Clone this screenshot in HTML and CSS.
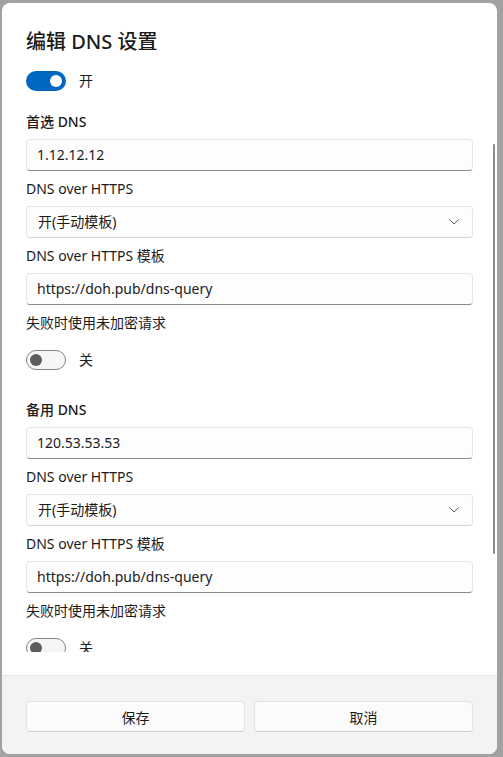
FILE: index.html
```html
<!DOCTYPE html>
<html lang="zh-CN">
<head>
<meta charset="utf-8">
<link rel="stylesheet" href="styles.css">
</head>
<body>
<div class="dialog">
  <div class="main">
    <div class="scroll">
      <h1 class="title">编辑 DNS 设置</h1>
      <div class="toggle-row top-toggle">
        <span class="toggle on"><span class="knob"></span></span>
        <span class="toggle-label">开</span>
      </div>

      <section class="group">
        <div class="heading">首选 DNS</div>
        <div class="field input">1.12.12.12</div>
        <div class="label">DNS over HTTPS</div>
        <div class="field select"><span>开(手动模板)</span>
          <svg class="chev" width="10" height="6" viewBox="0 0 10 6"><path d="M0.5 0.5 L5 5 L9.5 0.5" fill="none" stroke="#5c5c5c" stroke-width="1"/></svg>
        </div>
        <div class="label">DNS over HTTPS 模板</div>
        <div class="field input">https://doh.pub/dns-query</div>
        <div class="label">失败时使用未加密请求</div>
        <div class="toggle-row fallback">
          <span class="toggle off"><span class="knob"></span></span>
          <span class="toggle-label">关</span>
        </div>
      </section>

      <section class="group second">
        <div class="heading">备用 DNS</div>
        <div class="field input">120.53.53.53</div>
        <div class="label">DNS over HTTPS</div>
        <div class="field select"><span>开(手动模板)</span>
          <svg class="chev" width="10" height="6" viewBox="0 0 10 6"><path d="M0.5 0.5 L5 5 L9.5 0.5" fill="none" stroke="#5c5c5c" stroke-width="1"/></svg>
        </div>
        <div class="label">DNS over HTTPS 模板</div>
        <div class="field input">https://doh.pub/dns-query</div>
        <div class="label">失败时使用未加密请求</div>
        <div class="toggle-row fallback">
          <span class="toggle off"><span class="knob"></span></span>
          <span class="toggle-label">关</span>
        </div>
      </section>
    </div>
    <div class="scrollbar"></div>
  </div>
  <div class="footer">
    <button class="btn">保存</button>
    <button class="btn">取消</button>
  </div>
</div>
</body>
</html>
```

FILE: styles.css
```css
* { box-sizing: border-box; }
html, body { margin: 0; padding: 0; }
body {
  width: 503px;
  height: 757px;
  background: #a2a2a2;
  font-family: "Noto Sans", "Noto Sans CJK SC", sans-serif;
  font-size: 14px;
  color: #1b1b1b;
  overflow: hidden;
}
.dialog {
  margin: 3px 0 0 2px;
  width: 495px;
  height: 751px;
  background: #ffffff;
  border-radius: 8px;
  overflow: hidden;
  display: flex;
  flex-direction: column;
}
.main {
  position: relative;
  height: 673px;
  padding-bottom: 24px;
  border-bottom: 1px solid #e5e5e5;
  flex: none;
}
.scroll {
  height: 649px;
  overflow: hidden;
  padding: 25px 24px 0 24px;
}
.title {
  margin: 0;
  font-size: 20px;
  line-height: 28px;
  font-weight: 500;
  font-family: "Noto Sans", "Noto Sans CJK SC", sans-serif;
  color: #1a1a1a;
}
.toggle-row {
  display: flex;
  align-items: center;
  height: 20px;
  gap: 13px;
}
.top-toggle { margin-top: 15px; }
.toggle {
  width: 40px;
  height: 20px;
  border-radius: 10px;
  display: flex;
  align-items: center;
  flex: none;
}
.toggle.on {
  background: #0067c0;
  justify-content: flex-end;
  padding-right: 4px;
}
.toggle.on .knob {
  width: 12px; height: 12px; border-radius: 50%; background: #fff;
}
.toggle.off {
  background: #f6f6f6;
  border: 1px solid #858585;
  padding-left: 3px;
}
.toggle.off .knob {
  width: 12px; height: 12px; border-radius: 50%; background: #5d5d5d;
}
.toggle-label { line-height: 20px; }

.group { display: flex; flex-direction: column; margin-top: 21px; }
.group.second { margin-top: 30px; }
.heading { line-height: 20px; font-weight: 500; }
.label { line-height: 20px; margin-top: 8px; }
.field {
  height: 32px;
  margin-top: 7px;
  border: 1px solid #e5e5e5;
  border-radius: 4px;
  background: #fdfdfd;
  display: flex;
  align-items: center;
  padding: 0 11px 0 10px;
  line-height: 20px;
}
.input { border-bottom: 1px solid #8a8a8a; }
.select {
  justify-content: space-between;
  padding: 0 13px 0 11px;
  border-bottom-color: #d6d6d6;
}
.chev { display: block; }
.fallback { margin-top: 17px; }

.scrollbar {
  position: absolute;
  left: 491px;
  top: 141px;
  width: 2px;
  height: 410px;
  background: #8c8c8c;
  border-radius: 1px;
}

.footer {
  flex: 1;
  background: #f3f3f3;
  padding: 25px 24px 0 24px;
  display: flex;
  gap: 9px;
}
.btn {
  flex: 1;
  height: 31px;
  background: #fbfbfb;
  border: 1px solid #e3e3e3;
  border-bottom-color: #d0d0d0;
  border-radius: 4px;
  font-family: "Noto Sans", "Noto Sans CJK SC", sans-serif;
  font-size: 14px;
  color: #1b1b1b;
  padding: 0;
}
```
